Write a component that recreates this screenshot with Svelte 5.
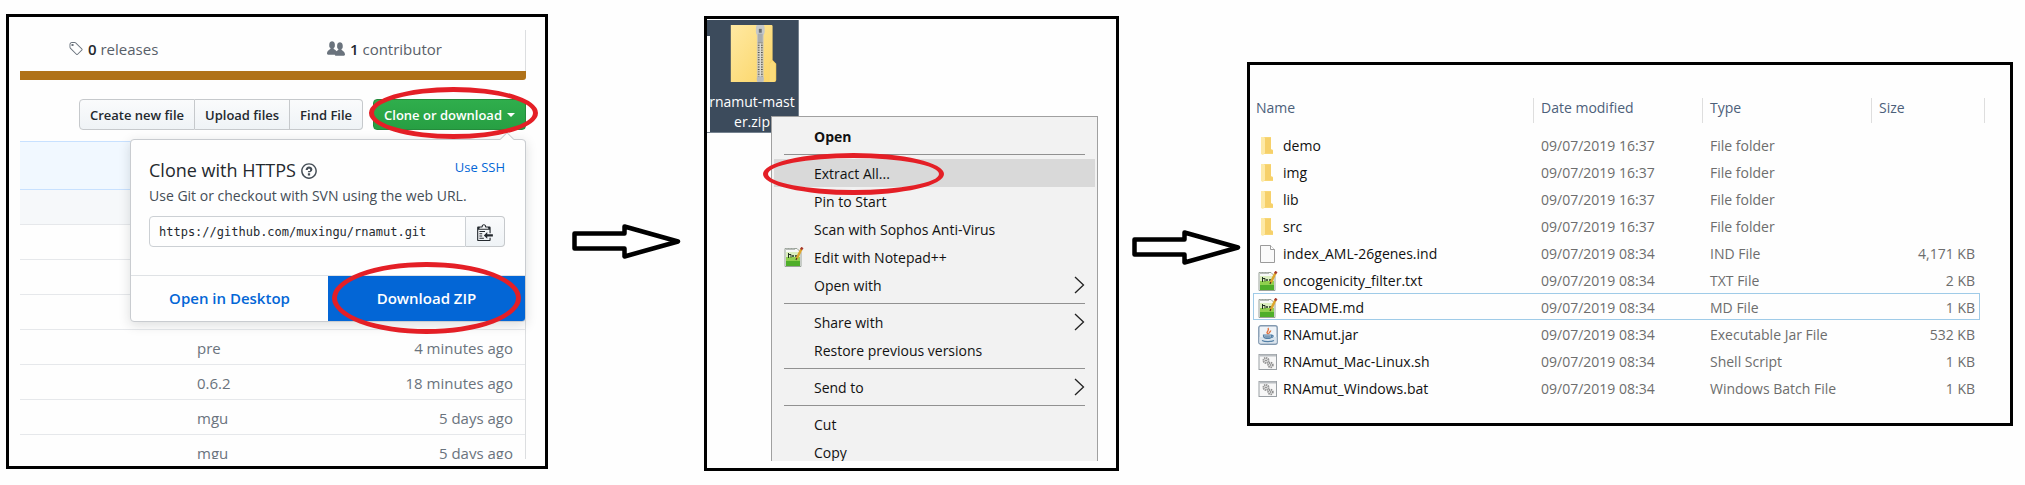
<script>
  const commits = [
    { message: '', age: '' },
    { message: '', age: '' },
    { message: '', age: '' },
    { message: '', age: '' },
    { message: 'pre', age: '4 minutes ago' },
    { message: '0.6.2', age: '18 minutes ago' },
    { message: 'mgu', age: '5 days ago' },
    { message: 'mgu', age: '5 days ago' }
  ];

  const menuGroups = [
    [{ label: 'Open', bold: true }],
    [
      { label: 'Extract All...', marked: true },
      { label: 'Pin to Start' },
      { label: 'Scan with Sophos Anti-Virus' },
      { label: 'Edit with Notepad++', icon: 'note' },
      { label: 'Open with', submenu: true }
    ],
    [{ label: 'Share with', submenu: true }, { label: 'Restore previous versions' }],
    [{ label: 'Send to', submenu: true }],
    [{ label: 'Cut' }, { label: 'Copy' }]
  ];

  const files = [
    { name: 'demo', date: '09/07/2019 16:37', type: 'File folder', size: '', icon: 'folder' },
    { name: 'img', date: '09/07/2019 16:37', type: 'File folder', size: '', icon: 'folder' },
    { name: 'lib', date: '09/07/2019 16:37', type: 'File folder', size: '', icon: 'folder' },
    { name: 'src', date: '09/07/2019 16:37', type: 'File folder', size: '', icon: 'folder' },
    { name: 'index_AML-26genes.ind', date: '09/07/2019 08:34', type: 'IND File', size: '4,171 KB', icon: 'page' },
    { name: 'oncogenicity_filter.txt', date: '09/07/2019 08:34', type: 'TXT File', size: '2 KB', icon: 'note' },
    { name: 'README.md', date: '09/07/2019 08:34', type: 'MD File', size: '1 KB', icon: 'note', selected: true },
    { name: 'RNAmut.jar', date: '09/07/2019 08:34', type: 'Executable Jar File', size: '532 KB', icon: 'jar' },
    { name: 'RNAmut_Mac-Linux.sh', date: '09/07/2019 08:34', type: 'Shell Script', size: '1 KB', icon: 'script' },
    { name: 'RNAmut_Windows.bat', date: '09/07/2019 08:34', type: 'Windows Batch File', size: '1 KB', icon: 'script' }
  ];

  let url = 'https://github.com/muxingu/rnamut.git';
</script>

{#snippet fileIcon(kind)}
  <svg class="file-icon" viewBox="0 0 20 20" aria-hidden="true">
    {#if kind === 'folder'}
      <path d="M3 1h10v12l2 1v4H5l-2-1z" fill="#f8d775" />
      <path d="M3 1h3l1 1v15l-2 2-2-1z" fill="#fde9a6" />
      <path d="M7 2h6v12l2 1v2H7z" fill="#f6d06a" />
    {:else if kind === 'page'}
      <path d="M2.5 1.5h10l4 4v13h-14z" fill="#fafafa" stroke="#9b9b9b" />
      <path d="M12.500 1.500v4h4" fill="#fff" stroke="#9b9b9b" />
    {:else if kind === 'note'}
      <path d="M1 1.500h12l4 4v14H1z" fill="#f7f9f7" stroke="#9aa39a" />
      <path d="M2 5h14v14H2z" fill="#dcefc0" />
      <path d="M2 10h14v9H2z" fill="#8fd04e" />
      <path d="M2 14h14v5H2z" fill="#4fae2a" />
      <path d="M2 2.500h9M3 1v2M6 1v2M9 1v2" stroke="#b8bcb8" fill="none" />
      <path d="M4.500 6v5M4.500 7.500h2.500v3M8 9h2M11 9h2M9 8v2M12 8v2" stroke="#223322" fill="none" />
      <path d="M17.500 2l-5 10" stroke="#dca52e" stroke-width="2.500" fill="none" />
      <path d="M17 2.500l1.500-2" stroke="#a83a2a" stroke-width="2.500" fill="none" />
      <path d="M12 13l.8-2" stroke="#4a3a20" stroke-width="1.200" fill="none" />
    {:else if kind === 'jar'}
      <rect x=".8" y=".8" width="18.400" height="18.400" rx="2" fill="#eef3f8" stroke="#8299b0" stroke-width="1.400" />
      <path d="M1.500 12h17v6h-17z" fill="#dbe5ee" />
      <path d="M10 9c-3-2 2-3 0-6M11 9c-1-1.500 2-2 1.500-3.500" fill="none" stroke="#e2703a" stroke-width="1.400" />
      <path d="M5.500 10h8v1.200c0 3-7 3-8 0zM13.500 10.500c2.500-.5 2 2-.5 2M4 15.500c3 1.500 9 1.500 12 0" fill="none" stroke="#5480a6" stroke-width="1.200" />
      <path d="M6 10.500h7l-1 2.500H7z" fill="#7d9cb8" />
    {:else}
      <rect x="1" y="2.500" width="17.500" height="15" fill="#f7f7f7" stroke="#9a9fa4" />
      <path d="M1.500 3.500h16.500" stroke="#b9bdc1" stroke-width="2" />
      <circle cx="8" cy="8.500" r="2.600" fill="#e0e0e0" stroke="#8f8f8f" stroke-width="1.800" stroke-dasharray="1.300 .7" />
      <circle cx="12.500" cy="13" r="2.300" fill="#e0e0e0" stroke="#8f8f8f" stroke-width="1.800" stroke-dasharray="1.300 .7" />
      <circle cx="8" cy="8.500" r=".8" fill="#777" />
      <circle cx="12.500" cy="13" r=".7" fill="#777" />
    {/if}
  </svg>
{/snippet}

{#snippet arrow()}
  <svg class="arrow" viewBox="0 0 110 36" aria-hidden="true">
    <path d="M2.500 9.500h50V2.500L106 17.500 52.500 32.500v-8h-50z" fill="#fff" stroke="#000" stroke-width="4.500" stroke-linejoin="round" />
  </svg>
{/snippet}

<main class="steps">
  <section class="panel repo">
    <div class="summary">
      <a href="#releases">
        <svg width="15" height="16" viewBox="0 0 14 16" aria-hidden="true"><path d="M7.730 1.730C7.260 1.260 6.620 1 5.960 1H3.500C2.130 1 1 2.130 1 3.500v2.470c0 .66.27 1.300.73 1.770l6.060 6.060c.39.39 1.020.39 1.410 0l4.590-4.590a.996.996 0 000-1.410L7.730 1.730zM2.380 7.090c-.31-.3-.47-.7-.47-1.130V3.500c0-.88.72-1.590 1.590-1.590h2.470c.42 0 .83.16 1.130.47l6.140 6.130-4.730 4.730-6.130-6.150zM3.010 3h2v2H3V3h.01z" /></svg>
        <span><b>0</b> releases</span>
      </a>
      <a href="#contributors">
        <svg width="18" height="18" viewBox="0 0 16 16" aria-hidden="true"><path d="M16 12.999c0 .439-.45 1-1 1H7.995c-.539 0-.994-.447-.995-.999H1c-.54 0-1-.561-1-1 0-2.634 3-4 3-4s.229-.409 0-1c-.841-.621-1.058-.59-1-3 .058-2.419 1.367-3 2.500-3s2.442.58 2.500 3c.058 2.410-.159 2.379-1 3-.229.59 0 1 0 1s1.549.711 2.420 2.088C9.196 9.369 10 8.999 10 8.999s.229-.409 0-1c-.841-.62-1.058-.59-1-3 .058-2.419 1.367-3 2.500-3s2.437.581 2.495 3c.059 2.410-.158 2.380-1 3-.229.59 0 1 0 1s3.005 1.366 3.005 4" /></svg>
        <span><b>1</b> contributor</span>
      </a>
    </div>
    <div class="language"></div>

    <div class="toolbar">
      <div class="group">
        <button>Create new file</button>
        <button>Upload files</button>
        <button>Find File</button>
      </div>
      <div class="clone">
        <button class="primary">Clone or download <span class="caret"></span></button>
        <div class="popup">
          <div class="popup-body">
            <div class="popup-head">
              <h2>Clone with HTTPS</h2>
              <svg width="16" height="18" viewBox="0 0 14 16" aria-hidden="true"><path d="M6 10h2v2H6v-2zm4-3.500C10 8.640 8 9 8 9H6c0-.55.45-1 1-1h.5c.28 0 .5-.22.5-.5v-1c0-.28-.22-.5-.5-.5h-1c-.28 0-.5.22-.5.5V7H4c0-1.500 1.500-3 3-3s3 1 3 2.500zM7 2.300c3.140 0 5.700 2.560 5.700 5.700s-2.560 5.700-5.700 5.700A5.710 5.710 0 011.300 8c0-3.140 2.560-5.700 5.700-5.700zM7 1C3.140 1 0 4.140 0 8s3.140 7 7 7 7-3.140 7-7-3.140-7-7-7z" /></svg>
              <a href="#ssh">Use SSH</a>
            </div>
            <p>Use Git or checkout with SVN using the web URL.</p>
            <div class="url">
              <input type="text" aria-label="Clone URL" value={url} readonly />
              <button aria-label="Copy to clipboard">
                <svg width="16" height="18" viewBox="0 0 14 16" aria-hidden="true"><path d="M2 13h4v1H2v-1zm5-6H2v1h5V7zm2 3V8l-3 3 3 3v-2h5v-2H9zM4.500 9H2v1h2.500V9zM2 12h2.500v-1H2v1zm9 1h1v2c-.02.28-.11.52-.3.7-.19.18-.42.28-.7.3H1c-.55 0-1-.45-1-1V4c0-.55.45-1 1-1h3c0-1.110.89-2 2-2 1.110 0 2 .89 2 2h3c.55 0 1 .45 1 1v5h-1V6H1v9h10v-2zM2 5h8c0-.55-.45-1-1-1H8c-.55 0-1-.45-1-1s-.45-1-1-1-1 .45-1 1-.45 1-1 1H3c-.55 0-1 .45-1 1z" /></svg>
              </button>
            </div>
          </div>
          <div class="popup-actions">
            <a href="#desktop">Open in Desktop</a>
            <a href="#zip" class="zip">Download ZIP<span class="ring ring-zip"></span></a>
          </div>
        </div>
        <span class="ring ring-clone"></span>
      </div>
    </div>

    <div class="commits">
      <div class="tip"></div>
      {#each commits as commit, i}
        <div class="commit" class:head={i === 0} class:cut={i === commits.length - 1}>
          <span>{commit.message}</span>
          <span>{commit.age}</span>
        </div>
      {/each}
    </div>
  </section>

  <div class="gap">{@render arrow()}</div>

  <section class="panel desktop">
    <div class="shortcut">
      <svg width="50" height="60" viewBox="0 0 50 60" aria-hidden="true">
        <defs>
          <linearGradient id="folder-fill" x1="0" y1="0" x2="1" y2="1">
            <stop offset="0" stop-color="#ffe9a2" />
            <stop offset="1" stop-color="#fbd566" />
          </linearGradient>
        </defs>
        <path d="M39 0h4a1 1 0 0 1 1 1v35l4 4v17a2 2 0 0 1-2 2h-7z" fill="#f7cf63" />
        <path d="M1 0h42a1 1 0 0 1 1 1v35l-3 3v20H1z" fill="url(#folder-fill)" />
        <path d="M41 59V40l3-3 3 3v17a2 2 0 0 1-2 2z" fill="#fcdc7a" />
        <path d="M28 0h7v59h-7z" fill="#cfcab8" />
        <path d="M31.500 18v36" stroke="#54544f" stroke-width="5" stroke-dasharray="1 1.500" />
        <path d="M31.500 19v35" stroke="#d9d9d4" stroke-width="1.500" />
        <rect x="27" y="-1" width="9" height="12" rx="4" fill="#c5c8ca" />
        <path d="M29 9h5v9h-5z" fill="#a9adb0" />
        <path d="M30 4h3v4h-3z" fill="#6b6f72" />
        <rect x="28" y="53" width="7" height="6" rx="2" fill="#b8bbbd" />
      </svg>
      <span>rnamut-mast<br />er.zip</span>
    </div>
    <div class="menu" role="menu">
      {#each menuGroups as group, g}
        {#if g > 0}<hr />{/if}
        {#each group as item}
          <button role="menuitem" class:bold={item.bold} class:marked={item.marked}>
            <span class="slot">{#if item.icon}{@render fileIcon(item.icon)}{/if}</span>
            <span class="label">{item.label}</span>
            {#if item.submenu}
              <svg class="chevron" width="11" height="18" viewBox="0 0 11 18" aria-hidden="true"><path d="M1 1l8.500 8L1 17" fill="none" stroke="#222" stroke-width="1.300" /></svg>
            {/if}
            {#if item.marked}<span class="ring ring-extract"></span>{/if}
          </button>
        {/each}
      {/each}
    </div>
  </section>

  <div class="gap second">{@render arrow()}</div>

  <section class="panel explorer">
    <table>
      <colgroup>
        <col />
        <col class="mid" />
        <col class="mid" />
        <col class="last" />
      </colgroup>
      <thead>
        <tr>
          <th><span>Name</span></th>
          <th><span>Date modified</span></th>
          <th><span>Type</span></th>
          <th><span>Size</span></th>
        </tr>
      </thead>
      <tbody>
        {#each files as file}
          <tr class:selected={file.selected}>
            <td><div class="name">{@render fileIcon(file.icon)}{file.name}</div></td>
            <td>{file.date}</td>
            <td>{file.type}</td>
            <td>{file.size}</td>
          </tr>
        {/each}
      </tbody>
    </table>
  </section>
</main>

<style>
  :global(body) {
    margin: 0;
    background: #fefefe;
  }

  .steps,
  .steps :is(button, input) {
    font-family: 'Open Sans', 'Noto Sans', sans-serif;
  }

  .steps {
    display: grid;
    grid-template-columns: 542fr 156fr 415fr 128fr 766fr;
    align-items: start;
    padding: 14px 12px 14px 6px;
    font-size: 14px;
    line-height: 20px;
    color: #111;
  }

  a {
    text-decoration: none;
  }

  button {
    cursor: pointer;
  }

  .panel {
    box-sizing: border-box;
    min-width: 0;
    border: 3px solid #000;
    background: #fefefe;
  }

  .gap {
    display: flex;
    justify-content: center;
    padding-top: 210px;
    padding-left: 2px;
  }

  .gap.second {
    padding-top: 216px;
    padding-left: 8px;
  }

  .arrow {
    width: 110px;
    height: 36px;
  }

  .ring {
    position: absolute;
    box-sizing: border-box;
    border: 5px solid #e41f26;
    border-radius: 50%;
    pointer-events: none;
  }

  /* Repository page */
  .repo {
    padding: 13px 19px 7px 11px;
  }

  .summary {
    display: flex;
    justify-content: space-between;
    align-items: center;
    height: 41px;
    padding: 0 83px 4px 48px;
    box-sizing: border-box;
    border-right: 1px solid #dcdee0;
    font-size: 15px;
  }

  .summary a {
    display: flex;
    align-items: center;
    gap: 5px;
    color: #586069;
  }

  .summary svg {
    fill: #6a737d;
  }

  .summary b {
    font-weight: 600;
    color: #24292e;
  }

  .language {
    height: 9px;
    border-radius: 0 0 3px 0;
    background: #b07219;
  }

  .toolbar {
    display: flex;
    justify-content: flex-end;
    gap: 10px;
    padding: 19px 0 11px;
  }

  .toolbar button {
    box-sizing: border-box;
    height: 31px;
    padding: 0 10px;
    border: 1px solid #c6c9cc;
    background: linear-gradient(#fafbfc, #eff3f6);
    color: #24292e;
    font-size: 13px;
    font-weight: 600;
    line-height: 20px;
    white-space: nowrap;
  }

  .group {
    display: flex;
  }

  .group button + button {
    border-left: 0;
  }

  .group button:first-child {
    border-radius: 4px 0 0 4px;
  }

  .group button:last-child {
    border-radius: 0 4px 4px 0;
  }

  .clone {
    position: relative;
  }

  .toolbar .primary {
    display: flex;
    align-items: center;
    gap: 5px;
    border-color: #258a3c;
    border-radius: 4px;
    background: linear-gradient(#2fae4c, #279f43);
    color: #fff;
  }

  .caret {
    border: 4px solid transparent;
    border-top-color: #fff;
    border-bottom: 0;
  }

  .ring-clone {
    top: -12px;
    left: -4px;
    right: -12px;
    height: 52px;
    z-index: 3;
  }

  .popup {
    position: absolute;
    z-index: 2;
    top: 40px;
    right: 0;
    width: 396px;
    box-sizing: border-box;
    border: 1px solid #c9ccd0;
    border-radius: 4px;
    background: #fefefe;
    box-shadow: 0 3px 12px rgba(27, 31, 35, 0.15);
  }

  .popup::before {
    content: '';
    position: absolute;
    top: -6px;
    right: 13px;
    width: 9px;
    height: 9px;
    border: 1px solid #c9ccd0;
    border-width: 1px 0 0 1px;
    background: #fefefe;
    transform: rotate(45deg);
  }

  .popup-body {
    padding: 18px 20px 28px 18px;
  }

  .popup-head {
    display: flex;
    align-items: center;
    gap: 5px;
  }

  .popup-head h2 {
    margin: 0;
    font-size: 18px;
    font-weight: 400;
    line-height: 24px;
    color: #24292e;
  }

  .popup-head svg {
    margin-top: 2px;
    fill: #444d56;
  }

  .popup-head a {
    margin-left: auto;
    align-self: flex-start;
    font-size: 13px;
    line-height: 18px;
    color: #0366d6;
  }

  .popup-body p {
    margin: 4px 0 10px;
    color: #444d56;
    white-space: nowrap;
  }

  .url {
    display: flex;
  }

  .url input {
    flex: 1;
    min-width: 0;
    box-sizing: border-box;
    height: 31px;
    padding: 0 9px;
    border: 1px solid #ccd0d4;
    border-radius: 4px 0 0 4px;
    background: #fefefe;
    color: #24292e;
    font-family: 'DejaVu Sans Mono', 'Liberation Mono', monospace;
    font-size: 12px;
    outline: 0;
  }

  .url button {
    display: flex;
    align-items: center;
    padding: 0 11px;
    border-left: 0;
    border-radius: 0 4px 4px 0;
  }

  .url svg {
    fill: #24292e;
  }

  .popup-actions {
    display: grid;
    grid-template-columns: 1fr 1fr;
    border-top: 1px solid #dfe2e5;
  }

  .popup-actions a {
    position: relative;
    color: #0366d6;
    font-size: 15px;
    font-weight: 600;
    line-height: 45px;
    text-align: center;
  }

  .popup-actions .zip {
    border-radius: 0 0 3px 0;
    background: #0366d6;
    color: #fff;
  }

  .ring-zip {
    top: -14px;
    left: 4px;
    right: 4px;
    height: 72px;
  }

  .commits {
    border-right: 1px solid #dcdee0;
    font-size: 15px;
    color: #6a737d;
  }

  .tip {
    height: 47px;
    border: 1px solid #c8e1ff;
    border-width: 1px 0;
    background: #f1f8ff;
  }

  .commit {
    display: flex;
    justify-content: space-between;
    box-sizing: border-box;
    height: 35px;
    padding: 0 12px 0 177px;
    border-bottom: 1px solid #e6e8eb;
    line-height: 36px;
  }

  .commit.head {
    background: #f6f8fa;
  }

  .commit.cut {
    height: 24px;
    border-bottom: 0;
    overflow: hidden;
  }

  /* Desktop and context menu */
  .desktop {
    display: grid;
    grid-template-columns: 64px 1fr;
    margin-top: 2px;
    padding: 1px 18px 7px 0;
  }

  .shortcut {
    grid-area: 1 / 1;
    display: flex;
    flex-direction: column;
    align-items: center;
    gap: 9px;
    box-sizing: border-box;
    width: 92px;
    height: 113px;
    padding: 5px 1px 0 0;
    border: solid #75828f;
    border-width: 0 1px 1px 0;
    background: linear-gradient(#fefefe, #fefefe) 0 16px / 3px 100% no-repeat #3c4b5c;
    color: #fff;
    text-align: center;
  }

  .shortcut svg {
    margin-left: 3px;
  }

  .menu {
    grid-area: 1 / 2;
    position: relative;
    box-sizing: border-box;
    height: 345px;
    margin-top: 96px;
    padding: 5px 2px 0;
    border: 1px solid #a0a0a0;
    border-bottom: 0;
    background: #f2f2f2;
    clip-path: inset(0 0 0 -20px);
  }

  .menu button {
    position: relative;
    display: flex;
    align-items: center;
    width: 100%;
    height: 28px;
    padding: 0 10px;
    border: 0;
    background: none;
    color: #111;
    font-size: 14px;
    line-height: 20px;
    text-align: left;
  }

  .menu .bold {
    font-weight: 700;
  }

  .menu .marked {
    background: #d9d9d9;
  }

  .slot {
    width: 30px;
    height: 20px;
  }

  .label {
    flex: 1;
    padding-top: 2px;
  }

  .menu hr {
    margin: 4px 10px;
    border: 0;
    border-top: 1px solid #919191;
  }

  .ring-extract {
    top: -6px;
    left: -11px;
    width: 181px;
    height: 42px;
    z-index: 1;
  }

  /* File list */
  .explorer {
    margin-top: 48px;
    padding: 33px 25px 22px 3px;
  }

  table {
    width: 100%;
    table-layout: fixed;
    border-collapse: collapse;
  }

  .mid {
    width: 169px;
  }

  .last {
    width: 113px;
  }

  th,
  td {
    padding: 0 0 0 7px;
    font-weight: 400;
    text-align: left;
    white-space: nowrap;
  }

  th {
    height: 33px;
    vertical-align: top;
    color: #4c607a;
  }

  th:first-child {
    padding-left: 3px;
  }

  th span {
    display: block;
    height: 25px;
    border-right: 1px solid #dedede;
  }

  td {
    height: 25px;
    padding-top: 2px;
    color: #6d6d6d;
  }

  td:first-child {
    padding-left: 5px;
    color: #111;
  }

  td:last-child {
    padding-right: 10px;
    text-align: right;
  }

  .name {
    display: flex;
    align-items: center;
    gap: 5px;
  }

  .file-icon {
    display: block;
    flex: none;
    width: 20px;
    height: 20px;
  }

  tr.selected {
    position: relative;
  }

  tr.selected td:first-child::before {
    content: '';
    position: absolute;
    inset: 0 5px 0 0;
    border: 1px solid #9fcbe8;
  }
</style>
